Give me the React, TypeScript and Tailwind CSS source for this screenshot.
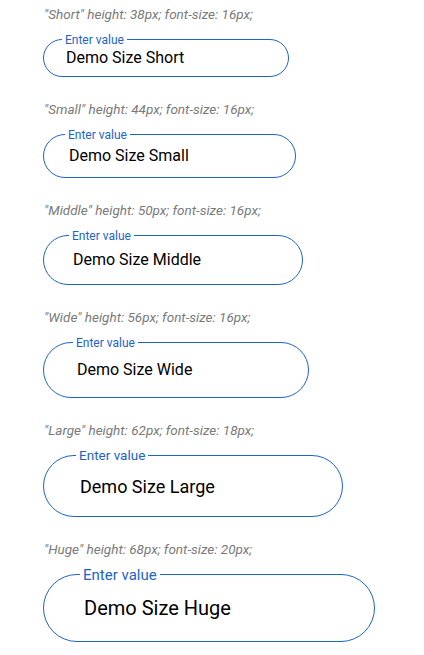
const sizes = [
  { name: "Short", height: 38, font: 16, label: 12, width: 246, pad: 22 },
  { name: "Small", height: 44, font: 16, label: 12, width: 253, pad: 25 },
  { name: "Middle", height: 50, font: 16, label: 12, width: 260, pad: 29 },
  { name: "Wide", height: 56, font: 16, label: 12, width: 266, pad: 33 },
  { name: "Large", height: 62, font: 18, label: 13.5, width: 300, pad: 36 },
  { name: "Huge", height: 68, font: 20, label: 15, width: 332, pad: 40 },
];

export default function App() {
  return (
    <div className="flex flex-col gap-[22px] bg-white px-[43px] pt-[4px] font-['Roboto',sans-serif]">
      {sizes.map((s) => (
        <div key={s.name} className="flex flex-col">
          <p className="ml-[1px] text-[13.5px] leading-[20px] italic text-[#7a7a7a]">
            "{s.name}" height: {s.height}px; font-size: {s.font}px;
          </p>
          <div
            className="relative mt-[15px] flex items-center rounded-full border border-[#1d63c9]"
            style={{ height: s.height, width: s.width, paddingLeft: s.pad }}
          >
            <span
              className="absolute top-0 -translate-y-1/2 bg-white px-[3px] leading-none text-[#1d63c9]"
              style={{ left: s.pad - 4, fontSize: s.label }}
            >
              Enter value
            </span>
            <span className="text-black" style={{ fontSize: s.font }}>
              Demo Size {s.name}
            </span>
          </div>
        </div>
      ))}
    </div>
  );
}
